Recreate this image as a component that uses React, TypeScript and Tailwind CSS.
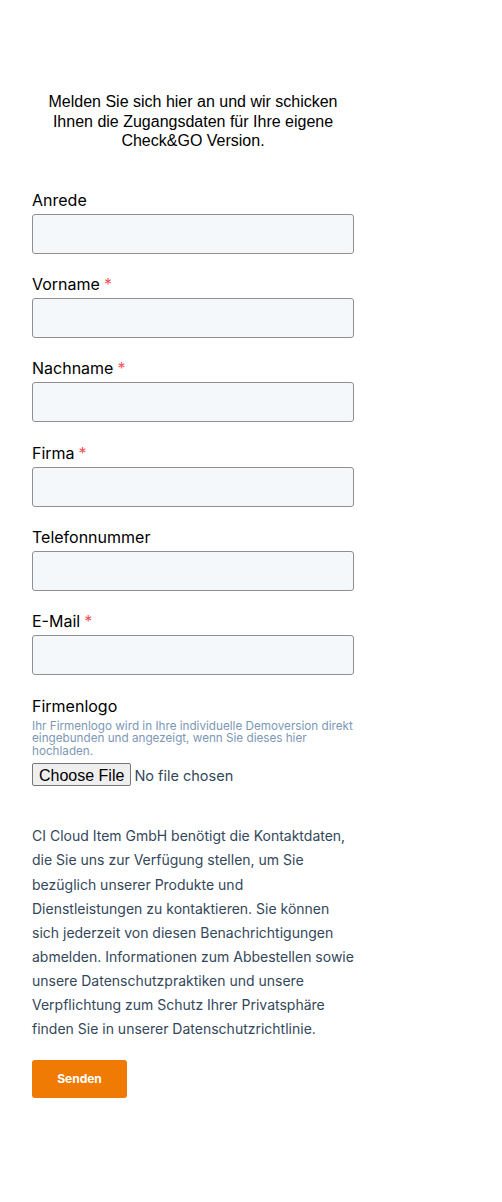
import React from 'react';

const FIELDS = [
    { name: 'salutation', label: 'Anrede', required: false },
    { name: 'firstname', label: 'Vorname', required: true },
    { name: 'lastname', label: 'Nachname', required: true },
    { name: 'company', label: 'Firma', required: true },
    { name: 'phone', label: 'Telefonnummer', required: false },
    { name: 'email', label: 'E-Mail', required: true },
];

export default function App() {
    return (
        <div className="min-h-[1202px] bg-white pl-8 pt-[92px] font-['Inter',sans-serif]">
            <div className="w-[322px]">
                <p className="text-center font-['Liberation_Sans',Arial,sans-serif] text-[16px] leading-[19.5px] text-black">
                    Melden Sie sich hier an und wir schicken Ihnen die Zugangsdaten für Ihre eigene Check&amp;GO Version.
                </p>

                <form className="mt-[37px]" onSubmit={(e) => e.preventDefault()}>
                    {FIELDS.map((field) => (
                        <div key={field.name} className="mb-[18.4px]">
                            <label htmlFor={field.name} className="mb-[2px] block text-[16px] font-normal leading-6 text-black">
                                {field.label}
                                {field.required && <span className="ml-1 text-[#f2545b]">*</span>}
                            </label>
                            <input
                                id={field.name}
                                type={field.name === 'email' ? 'email' : 'text'}
                                className="block h-10 w-full rounded-[3px] border border-[#8f8f8f] bg-[#f5f8fa] px-[15px] text-[16px] text-[#33475b] outline-none"
                            />
                        </div>
                    ))}

                    {/* Firmenlogo upload */}
                    <div>
                        <label htmlFor="logo" className="block text-[16px] font-normal leading-6 text-black">Firmenlogo</label>
                        <p className="mt-[2px] text-[11.7px] leading-[12.5px] text-[#7c98b6]">
                            Ihr Firmenlogo wird in Ihre individuelle Demoversion direkt eingebunden und angezeigt, wenn Sie dieses hier hochladen.
                        </p>
                        <input
                            id="logo"
                            type="file"
                            className="mt-[6px] block h-6 text-[14.5px] text-[#33475b] file:mr-[3px] file:h-[23px] file:rounded-[2px] file:border file:border-[#767676] file:bg-[#efefef] file:px-[6px] file:font-['Liberation_Sans',Arial,sans-serif] file:text-[16px] file:text-black"
                        />
                    </div>

                    <p className="mt-[37px] text-[14px] leading-[24.1px] text-[#33475b]">
                        CI Cloud Item GmbH benötigt die Kontaktdaten, die Sie uns zur Verfügung stellen, um Sie bezüglich unserer Produkte und Dienstleistungen zu kontaktieren. Sie können sich jederzeit von diesen Benachrichtigungen abmelden. Informationen zum Abbestellen sowie unsere Datenschutzpraktiken und unsere Verpflichtung zum Schutz Ihrer Privatsphäre finden Sie in unserer Datenschutzrichtlinie.
                    </p>

                    <button
                        type="submit"
                        className="mt-[19px] h-[38px] w-[95px] rounded-[3px] bg-[#ef7a04] text-[12px] font-bold text-white"
                    >
                        Senden
                    </button>
                </form>
            </div>
        </div>
    );
}
